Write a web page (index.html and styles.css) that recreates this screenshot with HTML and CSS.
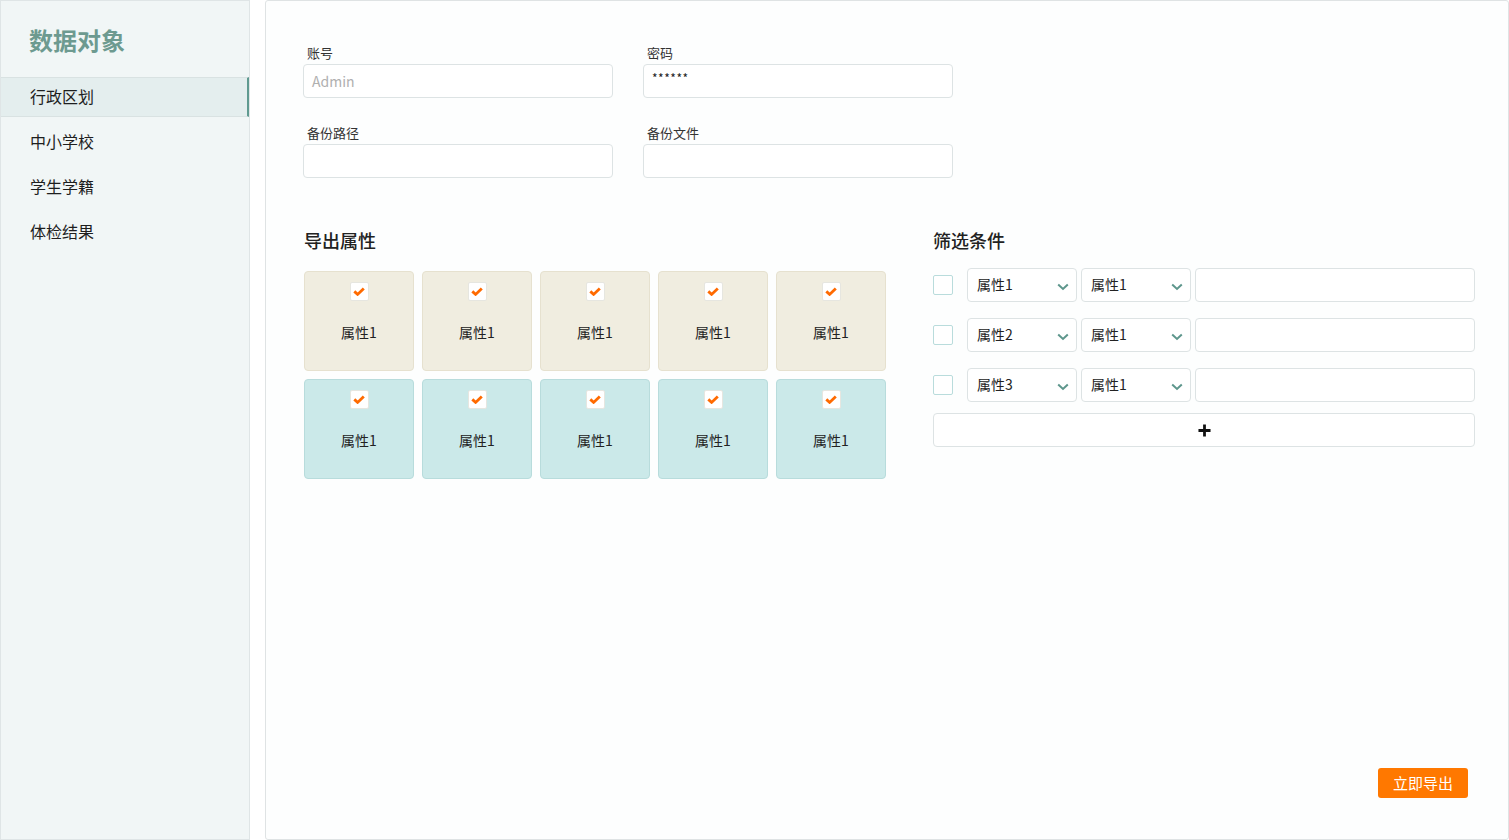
FILE: index.html
```html
<!DOCTYPE html>
<html lang="zh">
<head>
<meta charset="utf-8">
<title>数据对象</title>
<link rel="stylesheet" href="styles.css">
</head>
<body>
<aside class="sidebar">
  <h1 class="side-title">数据对象</h1>
  <nav class="side-nav">
    <a class="nav-item active">行政区划</a>
    <a class="nav-item">中小学校</a>
    <a class="nav-item">学生学籍</a>
    <a class="nav-item">体检结果</a>
  </nav>
</aside>
<main class="main">
  <div class="form-grid">
    <div class="field"><label>账号</label><div class="input placeholder">Admin</div></div>
    <div class="field"><label>密码</label><div class="input pwd">******</div></div>
    <div class="field"><label>备份路径</label><div class="input"></div></div>
    <div class="field"><label>备份文件</label><div class="input"></div></div>
  </div>
  <div class="sections">
    <section class="export">
      <h2 class="sec-title">导出属性</h2>
      <div class="cards">
        <div class="card beige"><span class="cb"><svg viewBox="0 0 12 9" width="12" height="9"><path d="M1.3 4.4 L4.6 7.4 L10.8 1.4" fill="none" stroke="#ff6a00" stroke-width="2.8"/></svg></span><span class="card-label">属性1</span></div>
        <div class="card beige"><span class="cb"><svg viewBox="0 0 12 9" width="12" height="9"><path d="M1.3 4.4 L4.6 7.4 L10.8 1.4" fill="none" stroke="#ff6a00" stroke-width="2.8"/></svg></span><span class="card-label">属性1</span></div>
        <div class="card beige"><span class="cb"><svg viewBox="0 0 12 9" width="12" height="9"><path d="M1.3 4.4 L4.6 7.4 L10.8 1.4" fill="none" stroke="#ff6a00" stroke-width="2.8"/></svg></span><span class="card-label">属性1</span></div>
        <div class="card beige"><span class="cb"><svg viewBox="0 0 12 9" width="12" height="9"><path d="M1.3 4.4 L4.6 7.4 L10.8 1.4" fill="none" stroke="#ff6a00" stroke-width="2.8"/></svg></span><span class="card-label">属性1</span></div>
        <div class="card beige"><span class="cb"><svg viewBox="0 0 12 9" width="12" height="9"><path d="M1.3 4.4 L4.6 7.4 L10.8 1.4" fill="none" stroke="#ff6a00" stroke-width="2.8"/></svg></span><span class="card-label">属性1</span></div>
        <div class="card teal"><span class="cb"><svg viewBox="0 0 12 9" width="12" height="9"><path d="M1.3 4.4 L4.6 7.4 L10.8 1.4" fill="none" stroke="#ff6a00" stroke-width="2.8"/></svg></span><span class="card-label">属性1</span></div>
        <div class="card teal"><span class="cb"><svg viewBox="0 0 12 9" width="12" height="9"><path d="M1.3 4.4 L4.6 7.4 L10.8 1.4" fill="none" stroke="#ff6a00" stroke-width="2.8"/></svg></span><span class="card-label">属性1</span></div>
        <div class="card teal"><span class="cb"><svg viewBox="0 0 12 9" width="12" height="9"><path d="M1.3 4.4 L4.6 7.4 L10.8 1.4" fill="none" stroke="#ff6a00" stroke-width="2.8"/></svg></span><span class="card-label">属性1</span></div>
        <div class="card teal"><span class="cb"><svg viewBox="0 0 12 9" width="12" height="9"><path d="M1.3 4.4 L4.6 7.4 L10.8 1.4" fill="none" stroke="#ff6a00" stroke-width="2.8"/></svg></span><span class="card-label">属性1</span></div>
        <div class="card teal"><span class="cb"><svg viewBox="0 0 12 9" width="12" height="9"><path d="M1.3 4.4 L4.6 7.4 L10.8 1.4" fill="none" stroke="#ff6a00" stroke-width="2.8"/></svg></span><span class="card-label">属性1</span></div>
      </div>
    </section>
    <section class="filter">
      <h2 class="sec-title">筛选条件</h2>
      <div class="filter-rows">
        <div class="frow">
          <span class="fcb"></span>
          <div class="select"><span>属性1</span><svg class="chev" viewBox="0 0 12 8" width="12" height="8"><path d="M1.2 1.5 L6 6 L10.8 1.5" fill="none" stroke="#5d968c" stroke-width="2"/></svg></div>
          <div class="select"><span>属性1</span><svg class="chev" viewBox="0 0 12 8" width="12" height="8"><path d="M1.2 1.5 L6 6 L10.8 1.5" fill="none" stroke="#5d968c" stroke-width="2"/></svg></div>
          <div class="finput"></div>
        </div>
        <div class="frow">
          <span class="fcb"></span>
          <div class="select"><span>属性2</span><svg class="chev" viewBox="0 0 12 8" width="12" height="8"><path d="M1.2 1.5 L6 6 L10.8 1.5" fill="none" stroke="#5d968c" stroke-width="2"/></svg></div>
          <div class="select"><span>属性1</span><svg class="chev" viewBox="0 0 12 8" width="12" height="8"><path d="M1.2 1.5 L6 6 L10.8 1.5" fill="none" stroke="#5d968c" stroke-width="2"/></svg></div>
          <div class="finput"></div>
        </div>
        <div class="frow">
          <span class="fcb"></span>
          <div class="select"><span>属性3</span><svg class="chev" viewBox="0 0 12 8" width="12" height="8"><path d="M1.2 1.5 L6 6 L10.8 1.5" fill="none" stroke="#5d968c" stroke-width="2"/></svg></div>
          <div class="select"><span>属性1</span><svg class="chev" viewBox="0 0 12 8" width="12" height="8"><path d="M1.2 1.5 L6 6 L10.8 1.5" fill="none" stroke="#5d968c" stroke-width="2"/></svg></div>
          <div class="finput"></div>
        </div>
        <div class="add-btn"><svg viewBox="0 0 14 14" width="13" height="13"><path d="M7 0.5 V13.5 M0.5 7 H13.5" stroke="#111" stroke-width="3"/></svg></div>
      </div>
    </section>
  </div>
  <button class="export-btn">立即导出</button>
</main>
</body>
</html>
```
FILE: styles.css
```css
* { box-sizing: border-box; }
html, body { margin: 0; padding: 0; }
body {
  width: 1509px;
  height: 840px;
  display: flex;
  gap: 15px;
  background: #ffffff;
  font-family: "Noto Sans CJK SC", "Noto Sans", sans-serif;
  color: #222;
  overflow: hidden;
}
.sidebar {
  width: 250px;
  height: 840px;
  background: #f1f6f6;
  border: 1px solid #dfe5e6;
  flex: none;
}
.side-title {
  margin: 0;
  padding: 23px 0 0 28px;
  height: 76px;
  font-size: 24px;
  line-height: 32px;
  font-weight: 700;
  color: #6d9a90;
}
.side-nav { display: flex; flex-direction: column; }
.nav-item {
  height: 45px;
  line-height: 43px;
  padding-bottom: 2px;
  padding-left: 29px;
  font-size: 16px;
  color: #1e1e1e;
}
.nav-item.active {
  height: 40px;
  line-height: 36px;
  padding-bottom: 2px;
  background: #e4eeee;
  border-top: 1px solid #d9e2e2;
  border-bottom: 1px solid #d9e2e2;
  border-right: 2px solid #5f9a90;
  margin-bottom: 3px;
}
.main {
  flex: 1;
  height: 840px;
  border: 1px solid #dfe3e4;
  border-radius: 3px;
  background: #fdfefe;
  padding: 43px 33px 41px 37px;
  display: flex;
  flex-direction: column;
}
.form-grid {
  display: grid;
  grid-template-columns: 310px 310px;
  column-gap: 30px;
  row-gap: 26px;
}
.field label {
  display: block;
  font-size: 13px;
  line-height: 18px;
  margin-bottom: 2px;
  padding-left: 4px;
  color: #333;
}
.input {
  height: 34px;
  border: 1px solid #dde3e4;
  border-radius: 4px;
  background: #fff;
  padding-left: 8px;
  font-size: 14px;
  line-height: 32px;
}
.input.placeholder { color: #b0b0b0; }
.input.pwd { font-size: 12px; line-height: 26px; letter-spacing: 0.5px; color: #222; }
.sections {
  display: flex;
  margin-top: 50px;
}
.sec-title {
  margin: 0;
  font-size: 18px;
  line-height: 24px;
  font-weight: 500;
  color: #222;
}
.export { width: 582px; margin-left: 1px; }
.cards {
  margin-top: 19px;
  display: grid;
  grid-template-columns: repeat(5, 110px);
  gap: 8px;
}
.card {
  height: 100px;
  border-radius: 4px;
  display: flex;
  flex-direction: column;
  align-items: center;
  padding-top: 10px;
}
.card.beige { background: #f0ede0; border: 1px solid #e6e1cf; }
.card.teal { background: #cbe9e9; border: 1px solid #b8dcdc; }
.cb {
  width: 19px;
  height: 19px;
  background: #fff;
  border: 1px solid #e6e6e0;
  border-radius: 2px;
  display: flex;
  align-items: center;
  justify-content: center;
}
.card-label {
  margin-top: 21px;
  font-size: 14px;
  line-height: 20px;
  color: #222;
}
.filter { margin-left: 47px; width: 542px; }
.filter-rows {
  margin-top: 16px;
  display: flex;
  flex-direction: column;
  gap: 16px;
}
.frow {
  display: flex;
  align-items: center;
  height: 34px;
}
.fcb {
  width: 20px;
  height: 20px;
  border: 1px solid #b9dcdc;
  border-radius: 2px;
  background: #fff;
  margin-right: 14px;
  flex: none;
}
.select {
  width: 110px;
  height: 34px;
  border: 1px solid #dde3e4;
  border-radius: 4px;
  background: #fff;
  display: flex;
  align-items: center;
  justify-content: space-between;
  padding: 0 7px 2px 9px;
  margin-right: 4px;
  font-size: 14px;
  color: #222;
  flex: none;
}
.chev { margin-top: 5px; }
.finput {
  flex: 1;
  height: 34px;
  border: 1px solid #dde3e4;
  border-radius: 4px;
  background: #fff;
}
.add-btn {
  margin-top: -5px;
  height: 34px;
  border: 1px solid #dde3e4;
  border-radius: 4px;
  background: #fff;
  display: flex;
  align-items: center;
  justify-content: center;
  padding-left: 1px;
}
.export-btn {
  margin-top: auto;
  align-self: flex-end;
  margin-right: 7px;
  width: 90px;
  height: 30px;
  border: none;
  border-radius: 3px;
  background: #ff7800;
  color: #fff;
  font-family: "Noto Sans CJK SC", sans-serif;
  font-size: 15px;
  line-height: 30px;
  padding: 0;
}
```
